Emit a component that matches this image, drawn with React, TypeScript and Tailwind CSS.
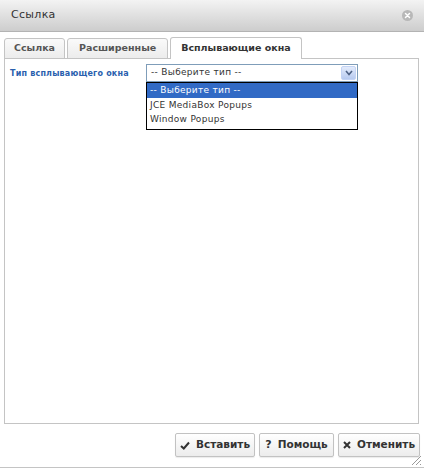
import React from "react";

const Tab = ({ label, active, pad }: { label: string; active?: boolean; pad: string }) => (
  <div
    className={
      active
        ? `h-[22px] ${pad} flex items-center border border-b-0 border-[#c4c4c4] rounded-t-[3px] bg-white text-[9.5px] font-bold text-[#333] relative z-10`
        : `h-[21px] ${pad} flex items-center border border-[#c4c4c4] rounded-t-[3px] bg-gradient-to-b from-[#fafafa] to-[#ececec] text-[9.5px] font-bold text-[#555]`
    }
  >
    {label}
  </div>
);

const Button = ({ icon, label, width }: { icon: React.ReactNode; label: string; width: string }) => (
  <button
    className={`${width} h-[24px] flex items-center justify-center gap-[6px] border border-[#c2c2c2] rounded-[2px] bg-gradient-to-b from-white to-[#ececec] text-[10.5px] font-bold text-[#333] shadow-[0_1px_1px_rgba(0,0,0,0.08)]`}
  >
    {icon}
    <span>{label}</span>
  </button>
);

export default function App() {
  return (
    <div className="w-[424px] h-[469px] bg-white relative overflow-hidden font-['DejaVu_Sans',Verdana,sans-serif]">
      {/* title bar */}
      <div className="h-[32px] flex items-center justify-between pl-[11px] pr-[11px] bg-gradient-to-b from-[#f3f3f3] to-[#cdcdcd] border-b border-[#b3b3b3]">
        <span className="text-[11px] tracking-[0.3px] text-[#333]">Ссылка</span>
        <div className="w-[11px] h-[11px] rounded-full bg-[#b8b8b8] flex items-center justify-center">
          <svg width="7" height="7" viewBox="0 0 7 7">
            <path d="M1.5 1.5 L5.5 5.5 M5.5 1.5 L1.5 5.5" stroke="#fff" strokeWidth="1.5" strokeLinecap="round" />
          </svg>
        </div>
      </div>

      <div className="pl-[4px] pr-[5px] pt-[5px]">
        {/* tabs */}
        <div className="flex items-end gap-[2px] h-[22px]">
          <Tab label="Ссылка" pad="px-[9px]" />
          <Tab label="Расширенные" pad="px-[11px]" />
          <Tab label="Всплывающие окна" pad="px-[10px]" active />
        </div>

        {/* panel */}
        <div className="h-[366px] -mt-px border border-[#c4c4c4] relative">
          <div className="flex items-start pt-[5px] pl-[5px]">
            <div className="w-[136px] pt-[4px] text-[8px] tracking-[0.2px] font-bold text-[#2a5fae]">Тип всплывающего окна</div>
            <div className="w-[212px] relative">
              <div className="h-[18px] border border-[#7f9db9] bg-white flex items-center justify-between pl-[4px] pr-px text-[9px] tracking-[0.3px] text-[#333]">
                <span>-- Выберите тип --</span>
                <div className="w-[15px] h-[14px] rounded-[2px] bg-gradient-to-b from-[#e3ebfb] to-[#b7caf0] border border-[#c3d3f5] flex items-center justify-center">
                  <svg width="8" height="6" viewBox="0 0 8 6">
                    <path d="M1 1 L4 4.5 L7 1" stroke="#4d6185" strokeWidth="1.6" fill="none" />
                  </svg>
                </div>
              </div>
              <div className="border border-black bg-white text-[9px] tracking-[0.3px] text-[#333] pb-[2px]">
                <div className="h-[15px] bg-[#316ac5] text-white flex items-center pl-[3px]">-- Выберите тип --</div>
                <div className="h-[15px] flex items-center pl-[3px]">JCE MediaBox Popups</div>
                <div className="h-[14px] flex items-center pl-[3px]">Window Popups</div>
              </div>
            </div>
          </div>
        </div>

        {/* buttons */}
        <div className="flex justify-end gap-[4px] pt-[9px] -mr-px">
          <Button
            width="w-[80px]"
            label="Вставить"
            icon={
              <svg width="10" height="9" viewBox="0 0 10 9">
                <path d="M1 5 L3.8 7.5 L9 1.5" stroke="#333" strokeWidth="2" fill="none" />
              </svg>
            }
          />
          <Button width="w-[75px]" label="Помощь" icon={<span className="text-[11px] font-bold">?</span>} />
          <Button
            width="w-[82px]"
            label="Отменить"
            icon={
              <svg width="8" height="8" viewBox="0 0 8 8">
                <path d="M1 1 L7 7 M7 1 L1 7" stroke="#333" strokeWidth="2" />
              </svg>
            }
          />
        </div>
      </div>

      {/* bottom line + grip */}
      <div className="absolute left-0 right-0 bottom-[1px] h-px bg-[#c4c4c4]" />
      <svg className="absolute right-[2px] bottom-[3px]" width="11" height="11" viewBox="0 0 11 11">
        <path d="M10 1 L1 10 M10 5 L5 10 M10 9 L9 10" stroke="#999" strokeWidth="1" />
      </svg>
    </div>
  );
}
